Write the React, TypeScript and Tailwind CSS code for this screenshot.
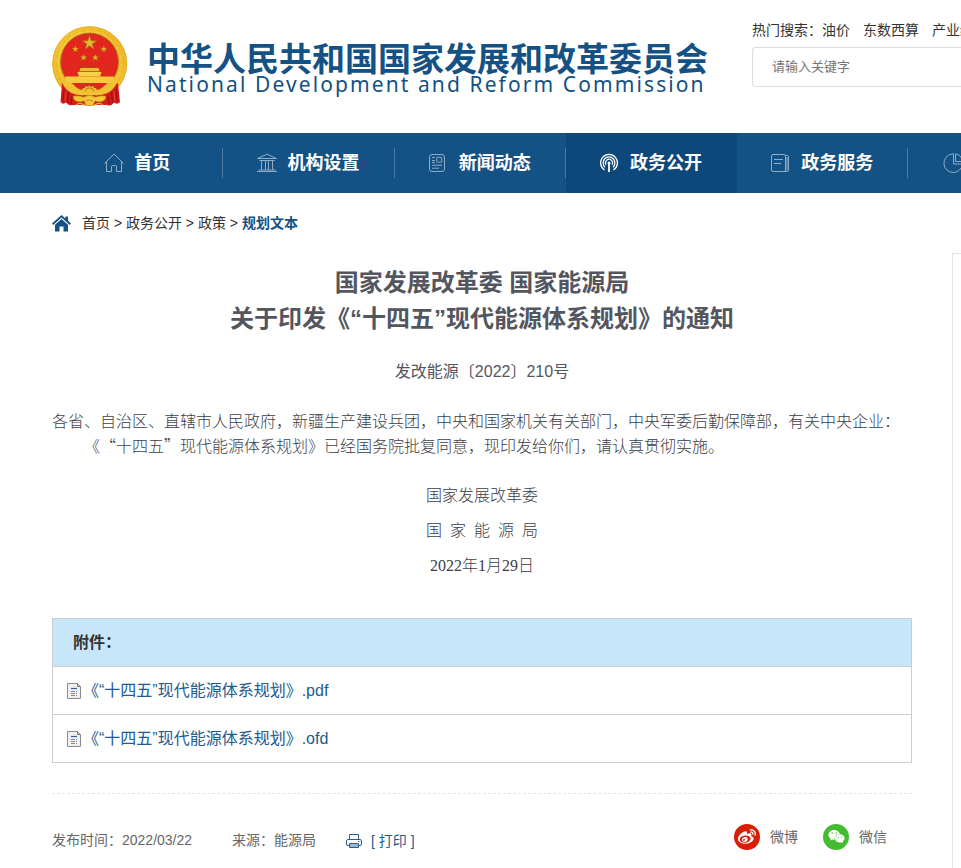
import type { ReactNode } from 'react';
import { FaWeibo, FaWeixin } from 'react-icons/fa';
import clsx from 'clsx';

const HOT_WORDS = ['油价', '东数西算', '产业结构'];

const CRUMBS = ['首页', '政务公开', '政策'];

const FILES = ['《“十四五”现代能源体系规划》.pdf', '《“十四五”现代能源体系规划》.ofd'];

const STAR = '0,-1 0.225,-0.309 0.951,-0.309 0.363,0.118 0.588,0.809 0,0.382 -0.588,0.809 -0.363,0.118 -0.951,-0.309 -0.225,-0.309';

function Star({ x, y, r }: { x: number; y: number; r: number }) {
  return (
    <g transform={`translate(${x} ${y}) scale(${r})`}>
      <polygon points={STAR} fill="#e8b62c" stroke="#b0641a" strokeWidth={0.1} />
    </g>
  );
}

function Emblem() {
  return (
    <svg width="76" height="81" viewBox="0 0 76 81" className="shrink-0" aria-hidden="true">
      <defs>
        <linearGradient id="gold" x1="0" y1="0" x2="1" y2="1">
          <stop offset="0" stopColor="#f6cb3c" />
          <stop offset="0.5" stopColor="#efb928" />
          <stop offset="1" stopColor="#f3c434" />
        </linearGradient>
      </defs>
      {/* wreath ring */}
      <circle cx="37.7" cy="37.7" r="37.5" fill="url(#gold)" />
      <circle cx="37.7" cy="37.7" r="36.9" fill="none" stroke="#dfa823" strokeWidth="0.8" />
      <circle cx="37.7" cy="37.2" r="33.6" fill="none" stroke="#d9a021" strokeWidth="1.4" strokeDasharray="2 3 1 2" opacity="0.55" />
      <circle cx="37.7" cy="37.2" r="31.4" fill="none" stroke="#fbe070" strokeWidth="1" strokeDasharray="3 2 1 3" opacity="0.6" />
      <circle cx="37.5" cy="36" r="28.9" fill="#e2261d" stroke="#a9741a" strokeWidth="0.9" />
      <Star x={37.5} y={17} r={7.6} />
      <Star x={23.4} y={23} r={3.6} />
      <Star x={51.8} y={23} r={3.6} />
      <Star x={31.6} y={31.7} r={3.6} />
      <Star x={43.4} y={31.7} r={3.6} />
      {/* gate tower */}
      <path d="M28.5 42 H46.5 L47.5 45 H27.5 Z" fill="#f0bd30" />
      <path d="M25.5 46 H49.5 L49 48 H48.5 V50.5 H26.5 V48 H26 Z" fill="#f8cf48" />
      <path d="M26.5 45.5 H48.5" stroke="#c07c1c" strokeWidth="0.7" />
      <path d="M13.5 50.5 H61.5 L62.5 57 H12.5 Z" fill="#f7cb40" />
      {/* drapes */}
      <path d="M10 57 Q20 62 27 68 L37.5 70 L48 68 Q56 62 66 57 L68 76 Q65 79 62 76.5 Q59 81 55 79 L20 79 Q17 80 14 76.5 Q11 79 8.5 76 Z" fill="#d61a1a" />
      <path d="M12 63 L11 75 M16.5 66 L15.5 77 M20 70 L19 78 M59.5 66 L60.5 77 M64 63 L65 75 M56 70 L57 78" stroke="#98100f" strokeWidth="1.1" fill="none" />
      <path d="M14 65 L13 75 M62 65 L63 75" stroke="#ee4038" strokeWidth="0.9" fill="none" />
      {/* ribbon and gear */}
      <path d="M9.5 55 Q18 55 22 59 Q26 64 30 65 L31 62 L33 62 L33.5 60 L36 61 L37.5 59.5 L39 61 L41.5 60 L42 62 L44 62 L45 65 Q49 64 53 59 Q57 55 65.5 55 Q62 66 51 68.5 L44 69.5 L37.5 67 L31 69.5 L24 68.5 Q13 66 9.5 55 Z" fill="#f3c232" />
      <path d="M33 65.5 A4.6 4.6 0 0 1 42 65.5" stroke="#b86b18" strokeWidth="0.9" fill="none" />
      <path d="M21 70 Q27 69 31.5 71 L37.5 69 L43.5 71 Q48 69 54 70 Q54 76 46.5 76 L43 75 L41 79.5 H34 L32 75 L28.5 76 Q21 76 21 70 Z" fill="#f4c738" stroke="#bb6a18" strokeWidth="0.6" />
      <path d="M34 75 Q37.5 73 41 75" stroke="#c77d1c" strokeWidth="0.9" fill="none" />
      <path d="M24 79 Q28 75.5 33 79.5 M42 79.5 Q47 75.5 51 79" stroke="#eab02c" strokeWidth="1.2" fill="none" />
    </svg>
  );
}

function NavSvg({ children }: { children: ReactNode }) {
  return (
    <svg width="20" height="20" viewBox="0 0 20 20" fill="none" stroke="currentColor" strokeWidth="1" aria-hidden="true">
      {children}
    </svg>
  );
}

const NAV = [
  {
    label: '首页',
    icon: (
      <NavSvg>
        <path d="M0.5 10.5 L10 1 L19.5 10.5 M2.5 9 V18.5 H7.5 V13.5 Q7.5 12.5 8.5 12.5 H11.5 Q12.5 12.5 12.5 13.5 V18.5 H17.5 V9" />
      </NavSvg>
    ),
  },
  {
    label: '机构设置',
    icon: (
      <NavSvg>
        <path d="M0.5 5.5 L10 1.2 L19.5 5.5 Z M2.5 7.5 H17.5 M4.5 7.5 V17 M8.5 7.5 V17 M11.5 7.5 V17 M15.5 7.5 V17 M1.5 17 H18.5 M0 18.5 H20" />
      </NavSvg>
    ),
  },
  {
    label: '新闻动态',
    icon: (
      <NavSvg>
        <rect x="0.5" y="1.5" width="15" height="17" rx="2.5" />
        <rect x="7.8" y="4.2" width="5" height="5" rx="0.8" />
        <path d="M3 4.5 H6 M3 7.5 H6 M3 9.5 H6 M3 12.2 H13 M3 15.2 H10" />
      </NavSvg>
    ),
  },
  {
    label: '政务公开',
    active: true,
    icon: (
      <svg width="20" height="20" viewBox="0 0 20 20" fill="none" stroke="currentColor" strokeWidth="1.3" aria-hidden="true">
        <path d="M4.6 17 A8.4 8.4 0 1 1 13.4 17 M5 14.2 A5.9 5.9 0 1 1 13 14.2 M6 11.6 A3.5 3.5 0 1 1 12 11.6" />
        <circle cx="9" cy="10" r="1.5" fill="currentColor" stroke="none" />
        <path d="M9 10 V19" strokeWidth="1.8" />
      </svg>
    ),
  },
  {
    label: '政务服务',
    icon: (
      <NavSvg>
        <rect x="0.5" y="1.5" width="14" height="17" rx="1.5" />
        <path d="M15 2.5 H16.5 Q17.5 2.5 17.5 3.5 V17 Q17.5 18.5 16 18.5 H13 M3 6.5 H12 M3 10.5 H10 M16 4 V17" />
      </NavSvg>
    ),
  },
  {
    label: '发展数据',
    icon: (
      <NavSvg>
        <path d="M9 1 A9.3 9.3 0 1 0 19.5 11 H10.5 V0.8 Z M12.5 0.8 V8.5 H19.3 A8.5 8.5 0 0 0 12.5 0.8 Z" />
      </NavSvg>
    ),
  },
];

function FileIcon() {
  return (
    <svg width="14" height="16" viewBox="0 0 14 16" className="shrink-0" aria-hidden="true">
      <path d="M0.5 0.5 H10.5 L13.5 3.5 V15.5 H0.5 Z" fill="#f1f1ef" stroke="#8c8c8c" />
      <path d="M10.5 0.5 V3.5 H13.5" fill="none" stroke="#777" />
      <path d="M4 5.5 H10" stroke="#2462ae" strokeWidth="1.2" />
      <path d="M4 8.5 H8 M9 8.5 H10 M4 10.5 H8 M9 10.5 H10 M4 12.5 H8 M9 12.5 H10" stroke="#8a8a8a" />
    </svg>
  );
}

function PrintIcon() {
  return (
    <svg width="16" height="16" viewBox="0 0 16 16" fill="none" stroke="#2b5c8a" aria-hidden="true">
      <path d="M3.5 6.5 V1.5 H12.5 V6.5 M3 12.5 H2 Q0.5 12.5 0.5 11 V8 Q0.5 6.5 2 6.5 H14 Q15.5 6.5 15.5 8 V11 Q15.5 12.5 14 12.5 H13" />
      <path d="M3.5 10.5 H12.5 V14.5 H3.5 Z" fill="#9db6cc" />
      <path d="M12 8.5 H13.5" />
    </svg>
  );
}

export default function App() {
  return (
    <div
      lang="zh-CN"
      className="min-h-screen overflow-x-hidden bg-white font-['Liberation_Sans','Noto_Sans_CJK_SC',sans-serif] text-sm text-[#333]"
    >
      <header className="flex items-start pl-13">
        <a href="#" className="mt-[26px] mb-[26px] flex shrink-0 items-start gap-[19px] text-[#145184]">
          <Emblem />
          <div className="mt-[15px]">
            <h1 className="font-['Noto_Sans_CJK_SC',sans-serif] text-[33px] leading-[33px] font-bold whitespace-nowrap">
              中华人民共和国国家发展和改革委员会
            </h1>
            <p className="font-['Noto_Sans',sans-serif] text-[21px] leading-5 tracking-widest whitespace-nowrap">
              National Development and Reform Commission
            </p>
          </div>
        </a>
        <div className="mt-5 ml-auto w-[209px] shrink-0">
          <div className="flex gap-[13px] leading-5 whitespace-nowrap">
            <span>
              热门搜索：<a href="#">{HOT_WORDS[0]}</a>
            </span>
            {HOT_WORDS.slice(1).map((word) => (
              <a key={word} href="#">{word}</a>
            ))}
          </div>
          <input
            type="text"
            aria-label="搜索"
            placeholder="请输入关键字"
            className="mt-[7px] block h-10 w-full rounded-l border border-r-0 border-[#ddd] pb-[2px] pl-[19px] text-[13px] placeholder:text-[#757575] focus:outline-none"
          />
        </div>
      </header>

      <nav className="overflow-hidden bg-[#145184] pl-13">
        <ul className="grid w-[1199px] grid-cols-7">
          {NAV.map(({ label, icon, active }) => (
            <li key={label} className={clsx('flex h-15 items-center', active && 'bg-[#0e4779]')}>
              <a
                href="#"
                className={clsx(
                  'flex h-[30px] flex-1 items-center justify-center gap-[10px] border-r text-lg font-bold text-white',
                  active ? 'border-transparent' : 'border-[#4d7ba2]'
                )}
              >
                <span className={active ? 'text-white' : 'text-[#8fadc8]'}>{icon}</span>
                {label}
              </a>
            </li>
          ))}
        </ul>
      </nav>

      <div className="flex items-stretch pl-13">
        <main className="min-w-0 flex-1 text-[#54565f]">
          <div className="flex h-15 items-center gap-[11px] text-[#333]">
            <svg width="19" height="17" viewBox="0 0 19 17" fill="#145184" aria-hidden="true">
              <path d="M9.5 0 L13.5 3.6 V1.5 H16 V5.8 L19 8.6 L17.8 10 L9.5 2.6 L1.2 10 L0 8.6 Z" />
              <path d="M9.5 4 L16 9.8 V16.5 H11.5 V11.5 H7.5 V16.5 H3 V9.8 Z" />
            </svg>
            <p>
              {CRUMBS.map((crumb) => (
                <span key={crumb}>
                  <a href="#">{crumb}</a>
                  {' > '}
                </span>
              ))}
              <a href="#" className="font-bold text-[#145184]">规划文本</a>
            </p>
          </div>

          <article className="mt-3 text-base">
            <h2 className="text-center text-2xl leading-9 font-bold">
              国家发展改革委 国家能源局
              <br />
              关于印发《“十四五”现代能源体系规划》的通知
            </h2>
            <p className="mt-[23px] text-center leading-6">发改能源〔2022〕210号</p>
            <div className="mt-6 font-['Noto_Sans_CJK_SC',sans-serif] leading-[25px] font-light text-[#3c3e47] [text-spacing-trim:space-all]">
              <p>各省、自治区、直辖市人民政府，新疆生产建设兵团，中央和国家机关有关部门，中央军委后勤保障部，有关中央企业：</p>
              <p className="indent-8">《“十四五”现代能源体系规划》已经国务院批复同意，现印发给你们，请认真贯彻实施。</p>
            </div>
            <div className="mt-5 text-center font-['Liberation_Serif','Noto_Sans_CJK_SC',serif] leading-[35px] font-light text-[#3c3e47]">
              <p>国家发展改革委</p>
              <p>国&ensp;家&ensp;能&ensp;源&ensp;局</p>
              <p>2022年1月29日</p>
            </div>
          </article>

          <table className="mt-[35px] w-full border-collapse text-base">
            <thead>
              <tr>
                <th scope="col" className="h-12 border border-[#ccc] bg-[#c8e6fa] px-5 text-left text-[#333]">
                  附件：
                </th>
              </tr>
            </thead>
            <tbody>
              {FILES.map((file) => (
                <tr key={file}>
                  <td className="h-12 border border-[#ccc] px-[14px]">
                    <a href="#" className="flex items-center gap-[2px] text-[#205b92]">
                      <FileIcon />
                      {file}
                    </a>
                  </td>
                </tr>
              ))}
            </tbody>
          </table>

          <footer className="mt-[30px] flex h-[86px] items-center border-t border-dashed border-[#e6e6e6] text-[#666]">
            <span className="mt-[6px]">发布时间：2022/03/22</span>
            <span className="mt-[6px] ml-10">来源：能源局</span>
            <button type="button" className="mt-2 ml-[30px] flex items-center gap-[9px] text-[#205b92]">
              <PrintIcon />
              [ 打印 ]
            </button>
            <a href="#" className="ml-auto flex items-center gap-[10px]">
              <span className="flex size-[26px] items-center justify-center rounded-full bg-[#d81e06] text-white">
                <FaWeibo size={18} />
              </span>
              微博
            </a>
            <a href="#" className="mr-[25px] ml-[25px] flex items-center gap-[10px]">
              <span className="flex size-[26px] items-center justify-center rounded-full bg-[#44bc31] text-white">
                <FaWeixin size={17} />
              </span>
              微信
            </a>
          </footer>
        </main>
        <aside className="mt-15 ml-10 w-[9px] shrink-0 border-t border-l border-[#e4e6ed]" />
      </div>
    </div>
  );
}
